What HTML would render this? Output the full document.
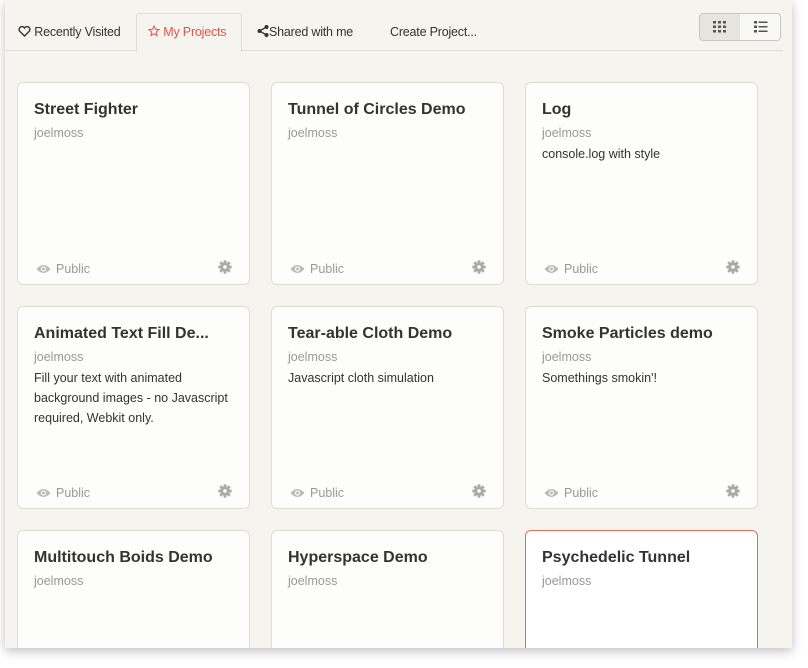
<!DOCTYPE html>
<html><head><style>
html,body{margin:0;width:808px;height:668px;overflow:hidden}
body{background:#fff;font-family:"Liberation Sans",sans-serif;position:relative}
.panel{position:absolute;left:5px;top:0;width:787px;height:648px;background:#f5f4ef;box-shadow:0 3px 10px rgba(0,0,0,.25);overflow:hidden}
.tabline{position:absolute;left:1px;top:50px;width:777px;height:1px;background:#dcdbd6}
.tab{position:absolute;top:25px;font-size:12.5px;color:#333;letter-spacing:-0.2px}
.active{position:absolute;left:131px;top:13px;width:104px;height:38px;border:1px solid #dcdbd6;border-bottom:none;border-radius:3px 3px 0 0;background:#f5f4ef}
.vb{position:absolute;top:13px;height:26px;border:1px solid #c8c7c2;background:#f8f8f5}
#cards{position:absolute;left:0;top:0;width:792px;height:648px;overflow:hidden}
.card{position:absolute;width:233px;height:203px;background:#fdfdfb;border:1px solid #dcdcd8;border-radius:6px;box-sizing:border-box}
.card h3{margin:0;position:absolute;left:16px;top:18px;font-size:16px;font-weight:bold;color:#333;white-space:nowrap}
.card .a{position:absolute;left:16px;top:43px;font-size:12.5px;color:#999}
.card .d{position:absolute;left:16px;top:61px;width:205px;font-size:12.5px;line-height:20px;color:#333}
.card .p{position:absolute;left:18px;top:179px;font-size:12.5px;color:#999}
.card .p svg{vertical-align:-1px;margin-right:5px}
.card .g{position:absolute;left:200px;top:177px}
</style></head><body>
<div class="panel">
<div class="tabline"></div>
<div class="active"></div>
<div class="tab" style="left:13px"><svg width="13" height="11" viewBox="0 0 13 11" style="vertical-align:-1px"><path d="M6.5 10 L1.5 5 A2.6 2.6 0 0 1 6.5 2 A2.6 2.6 0 0 1 11.5 5 Z" fill="none" stroke="#333" stroke-width="1.4"/></svg> Recently Visited</div>
<div class="tab" style="left:143px;color:#e9524a"><svg width="12" height="12" viewBox="0 0 12 12" style="vertical-align:-1px"><path d="M6 1 L7.4 4.3 L11 4.6 L8.2 7 L9.1 10.6 L6 8.7 L2.9 10.6 L3.8 7 L1 4.6 L4.6 4.3 Z" fill="none" stroke="#e9524a" stroke-width="1"/></svg> My Projects</div>
<div class="tab" style="left:252px"><svg width="12" height="12" viewBox="0 0 12 12" style="vertical-align:-1px"><circle cx="2.5" cy="6" r="2" fill="#333"/><circle cx="9.5" cy="2" r="2" fill="#333"/><circle cx="9.5" cy="10" r="2" fill="#333"/><path d="M2.5 6L9.5 2M2.5 6L9.5 10" stroke="#333" stroke-width="1.3"/></svg>Shared with me</div>
<div class="tab" style="left:385px">Create Project...</div>
<div class="vb" style="left:694px;width:40px;border-radius:4px 0 0 4px;background:#e6e5e0"><svg width="14" height="12" viewBox="0 0 14 12" style="position:absolute;left:13px;top:7px" fill="#555"><rect x="0" y="0" width="3" height="2.5"/><rect x="5" y="0" width="3" height="2.5"/><rect x="10" y="0" width="3" height="2.5"/><rect x="0" y="4.5" width="3" height="2.5"/><rect x="5" y="4.5" width="3" height="2.5"/><rect x="10" y="4.5" width="3" height="2.5"/><rect x="0" y="9" width="3" height="2.5"/><rect x="5" y="9" width="3" height="2.5"/><rect x="10" y="9" width="3" height="2.5"/></svg></div>
<div class="vb" style="left:735px;width:40px;border-radius:0 4px 4px 0;border-left:none"><svg width="14" height="12" viewBox="0 0 14 12" style="position:absolute;left:14px;top:7px" fill="#555"><rect x="0" y="0" width="3" height="2.5"/><rect x="4.5" y="0.5" width="9" height="1.5"/><rect x="0" y="4.5" width="3" height="2.5"/><rect x="4.5" y="5" width="9" height="1.5"/><rect x="0" y="9" width="3" height="2.5"/><rect x="4.5" y="9.5" width="9" height="1.5"/></svg></div>
</div>
<div id="cards"></div>
<script>
var data=[["Street Fighter",""],["Tunnel of Circles Demo",""],["Log","console.log with style"],["Animated Text Fill De...","Fill your text with animated background images - no Javascript required, Webkit only."],["Tear-able Cloth Demo","Javascript cloth simulation"],["Smoke Particles demo","Somethings smokin'!"],["Multitouch Boids Demo",""],["Hyperspace Demo",""],["Psychedelic Tunnel",""]];
var xs=[17,271,525],ys=[82,306,530],h="";
var eye='<svg width="15" height="10" viewBox="0 0 15 10"><path d="M0.5 5 Q7.5 -3 14.5 5 Q7.5 13 0.5 5Z" fill="#bbb"/><circle cx="7.5" cy="5" r="2.6" fill="#fdfdfb"/><circle cx="7.5" cy="5" r="1.5" fill="#bbb"/></svg>';
var gear='<svg width="14" height="14" viewBox="0 0 14 14"><g fill="#aaa"><circle cx="7" cy="7" r="4.8"/>'+[0,45,90,135].map(function(a){return '<rect x="5.6" y="0.3" width="2.8" height="13.4" transform="rotate('+a+' 7 7)"/>'}).join('')+'</g><circle cx="7" cy="7" r="1.8" fill="#fdfdfb"/></svg>';
data.forEach(function(c,i){var x=xs[i%3],y=ys[Math.floor(i/3)];
var hh=i>5?'height:125px;':'';
var st='left:'+x+'px;top:'+y+'px;'+hh+(i==8?'border-color:#e9675c;background:#fff;':'');
h+='<div class="card" style="'+st+'"><h3>'+c[0]+'</h3><div class="a">joelmoss</div>'+(c[1]?'<div class="d">'+c[1]+'</div>':'')+(i<6?'<div class="p">'+eye+'Public</div><div class="g">'+gear+'</div>':'')+'</div>';});
document.getElementById('cards').innerHTML=h;
</script>
</body></html>
